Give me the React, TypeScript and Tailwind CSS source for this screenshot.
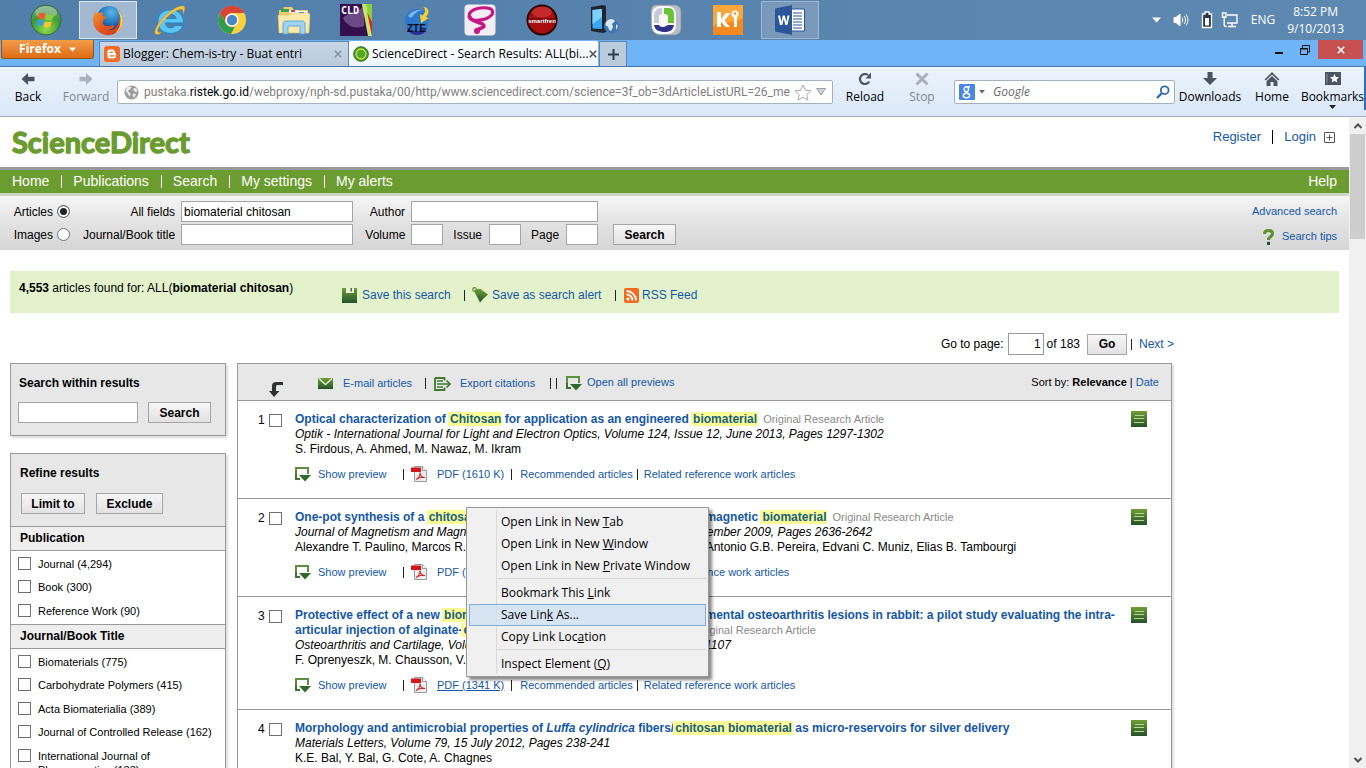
import type { ReactNode } from "react";

const UI = "font-['Open_Sans','Noto_Sans',sans-serif]";
const PAGE = "font-['Liberation_Sans',Arial,sans-serif]";

/* ---------- taskbar icons ---------- */

function StartIcon() {
  return (
    <svg width="32" height="32" viewBox="0 0 32 32" aria-hidden="true">
      <defs>
        <radialGradient id="orb" cx="50%" cy="80%" r="80%">
          <stop offset="0" stopColor="#8fdc4a" />
          <stop offset="0.6" stopColor="#3f9a3a" />
          <stop offset="1" stopColor="#6f9f7a" />
        </radialGradient>
      </defs>
      <circle cx="16" cy="16" r="15" fill="url(#orb)" stroke="#2f6b3c" strokeWidth="1" />
      <ellipse cx="16" cy="8.5" rx="11" ry="6.5" fill="#fff" opacity="0.3" />
      <path d="M9 9.500c2.300-1 4.300-.8 6.500.4l-1.300 5.400c-2-1-4.200-1.200-6.500-.2z" fill="#f0592b" />
      <path d="M16.700 10.400c2.200 1 4.400 1 6.800 0l-1.500 5.500c-2.200 1-4.400.9-6.600-.1z" fill="#8fd03a" />
      <path d="M7.400 16.500c2.300-1 4.300-.8 6.400.3l-1.400 5.300c-2-1.100-4.200-1.300-6.500-.2z" fill="#3d9be0" />
      <path d="M15 17.400c2.200 1 4.400 1 6.700 0l-1.500 5.400c-2.200 1-4.400.9-6.600-.1z" fill="#fdc52f" />
    </svg>
  );
}

function FirefoxIcon() {
  return (
    <svg width="32" height="32" viewBox="0 0 32 32" aria-hidden="true">
      <defs>
        <radialGradient id="ffg" cx="60%" cy="25%" r="75%">
          <stop offset="0" stopColor="#58b7ea" />
          <stop offset="0.6" stopColor="#2272b8" />
          <stop offset="1" stopColor="#173a78" />
        </radialGradient>
        <linearGradient id="fft" x1="0" y1="0" x2="1" y2="1">
          <stop offset="0" stopColor="#f39a2d" />
          <stop offset="0.5" stopColor="#e4581f" />
          <stop offset="1" stopColor="#c93a1a" />
        </linearGradient>
      </defs>
      <circle cx="17" cy="14.500" r="12.500" fill="url(#ffg)" />
      <path d="M25 5.500c5 4 6.600 9.500 5.200 15-1.600 6.500-7.600 10.700-14 10.700C8.500 31.200 1 25 1 16c0-3.600 1.300-7 3-9.200 0 1.400.3 2.300.9 3.100C6.700 8.300 9 8.300 11.500 9c-.8 1-1 2-.7 3.100 1 .5 2.400.5 3.600.8-.2 1.600-2 2.300-3.200 3-.2 1.300.4 2.300-.8 2.600 1.200 3.400 4.800 4.600 7.800 3.400 2.400-1 3.800-.9 4.600.2-1.700 2.500-4.300 4-7.500 3.900 7 1.600 12.600-4.500 11.500-11.500 1 1 1.300 2.100 1.500 3.300.8-4.300-.8-8.800-3.300-12.300z" fill="url(#fft)" />
      <path d="M25 5.500c5 4 6.600 9.500 5.200 15-1 4-3.600 7-7 8.900 4-4 5.500-8.400 5.100-11.600.8-4.300-.8-8.800-3.300-12.300z" fill="#fbd24a" />
    </svg>
  );
}

function IeIcon() {
  return (
    <svg width="32" height="32" viewBox="0 0 32 32" aria-hidden="true">
      <path d="M29.500 19H11.400c.3 3 2.300 4.800 5.200 4.800 2.200 0 3.700-.8 4.500-2.400h7.700C27.400 26.200 23 29.400 16.600 29.400 9 29.400 3.800 24.600 3.800 17.600S9 5.800 16.500 5.800 29.700 10.700 29.500 19zm-7.400-4.600c-.3-2.400-2.300-4-5.200-4s-5 1.600-5.500 4z" fill="#5cc5f2" stroke="#1f86c8" strokeWidth="1" />
      <path d="M8 27.500c-3.200 3.500-6.600 3.700-7 1.200C.2 24.500 7 15 14.500 9 22 3 28.600.4 30.300 2.800c1 1.500.3 4.400-1.300 7.200.4-2.200.3-3.900-.8-4.500C25.700 4.200 19 7.600 12.800 13.400 6 19.700 2.600 26 4 27.800c.7.900 2.200.7 4-.3z" fill="#f6c63c" stroke="#d99a1d" strokeWidth="0.500" />
    </svg>
  );
}

function ChromeIcon() {
  return (
    <svg width="30" height="30" viewBox="0 0 30 30" aria-hidden="true">
      <circle cx="15" cy="15" r="14" fill="#fcd040" />
      <path d="M2.900 8A14 14 0 0 1 27.300 8H15a7 7 0 0 0-6.300 10z" fill="#db4437" />
      <path d="M2.900 8 9 18.500A7 7 0 0 0 18 21.500L14 29A14 14 0 0 1 2.900 8z" fill="#2e9e4f" />
      <circle cx="15" cy="15" r="6.600" fill="#fff" />
      <circle cx="15" cy="15" r="5.200" fill="#4a86c8" />
    </svg>
  );
}

function FolderIcon() {
  return (
    <svg width="34" height="30" viewBox="0 0 34 30" aria-hidden="true">
      <path d="M2 5h4l1-3h8l2 3h14v22H2z" fill="#eccf72" />
      <path d="M4 4h8v3H4z" fill="#3da14c" />
      <path d="M12 5h9v3h-9z" fill="#fff" />
      <path d="M14 5h4v2h-4z" fill="#d5412e" />
      <path d="M21 6h9v4h-9z" fill="#fff" />
      <path d="M22 7h5v2h-5z" fill="#3a87d0" />
      <path d="M1 10h11l3-2h17l1 2-1 18H2z" fill="#fae9a8" stroke="#d9b95c" strokeWidth="0.600" />
      <path d="M6 29V19c0-2 1-3 3-3h16c2 0 3 1 3 3v10h-5v-8H11v8z" fill="#9fd4f2" stroke="#4f9fd0" strokeWidth="0.800" />
    </svg>
  );
}

function CldIcon() {
  return (
    <svg width="32" height="32" viewBox="0 0 32 32" aria-hidden="true">
      <path d="M0 0h32v32H0z" fill="#35104f" />
      <path d="M3 14C8 8 16 10 24 2v20C17 25 8 24 3 14z" fill="#6b4a85" />
      <path d="M22 0h10v32h-3z" fill="#8ccf3f" />
      <path d="M22 0h4l6 32h-4z" fill="#c4e96a" />
      <path d="M27 8l5 10v14z" fill="#e0271f" />
      <text x="1" y="10" fontFamily="DejaVu Sans Mono, monospace" fontSize="10" fontWeight="700" fill="#fff">CLD</text>
    </svg>
  );
}

function ZteIcon() {
  return (
    <svg width="30" height="32" viewBox="0 0 30 32" aria-hidden="true">
      <circle cx="14" cy="17" r="12" fill="#2f77c9" />
      <path d="M4 24c6 4 14 4 20 0-2 6-6 7-10 7S6 29 4 24z" fill="#2a2f96" />
      <path d="M5 12c4-5 10-7 14-6-5 1-8 4-11 8z" fill="#7fb8ee" />
      <path d="M20 3c6 0 7 5 3 10l3 1-8 5-1-9 2.500 1.500C23 8 23 5 20 3z" fill="#f4d030" />
      <text x="4" y="28" fontFamily="Liberation Sans, sans-serif" fontSize="10" fontWeight="700" fill="#0a0a14">ZTE</text>
    </svg>
  );
}

function SwirlIcon() {
  return (
    <svg width="32" height="32" viewBox="0 0 32 32" aria-hidden="true">
      <rect x="0.500" y="0.500" width="31" height="31" rx="4" fill="#f3eef3" />
      <path d="M27 5C18 2 5 5 5 12c0 7 16 4 20 1 4-2 4-5 3-7" fill="none" stroke="#c71585" strokeWidth="3" strokeLinecap="round" />
      <path d="M6 13c2 6 14 5 14 9 0 2-4 2-7 4" fill="none" stroke="#c71585" strokeWidth="3.500" strokeLinecap="round" />
      <circle cx="13" cy="27" r="3" fill="#c71585" />
    </svg>
  );
}

function SmartfrenIcon() {
  return (
    <svg width="32" height="32" viewBox="0 0 32 32" aria-hidden="true">
      <circle cx="16" cy="16" r="14.500" fill="#a90d10" stroke="#2a0405" strokeWidth="2" />
      <ellipse cx="16" cy="8" rx="10" ry="5.500" fill="#e0484a" opacity="0.500" />
      <path d="M2 14h28v5H2z" fill="#7c0a0c" />
      <text x="16" y="18.500" textAnchor="middle" fontFamily="Liberation Sans, sans-serif" fontSize="6" fontWeight="700" fill="#fff">smartfren</text>
    </svg>
  );
}

function PhoneIcon() {
  return (
    <svg width="32" height="32" viewBox="0 0 32 32" aria-hidden="true">
      <path d="M3 3 15 1l3 1v26l-3 1-12-2z" fill="#20242c" />
      <path d="M4.500 6 14 5v20l-9.500-.5z" fill="#38a8f5" />
      <path d="M4.500 6 14 5v8L4.500 20z" fill="#7fd0ff" />
      <circle cx="23.500" cy="22" r="7.500" fill="#3f77b4" />
      <path d="M19 17c3-3 7-2 8 0l-3 3 1 3-2 4c-3-1-2-4-4-5-2 0-2-3 0-5zM28 20l2 2-2 4z" fill="#dfe8ee" />
    </svg>
  );
}

function NokiaIcon() {
  return (
    <svg width="32" height="32" viewBox="0 0 32 32" aria-hidden="true">
      <path d="M6 1h18c5 0 7 3 7 7v16c0 5-3 7-7 7H10c-6 0-9-5-9-12V8c0-5 2-7 5-7z" fill="#b9bec6" stroke="#868c98" strokeWidth="0.800" />
      <rect x="2" y="2" width="24" height="28" rx="8" fill="#f7f8fa" />
      <path d="M14 4h4c4 0 6 2 6 6v9h-6v-6c0-2-1-3-4-3z" fill="#6cc235" />
      <path d="M12 4v6c-2 0-3 1-3 3v6H4v-7c0-5 3-8 8-8z" fill="#c6c9d8" />
      <path d="M4 21h5c1 2 3 2 5 2l4-2h6c-1 5-4 7-9 7-6 0-10-2-11-7z" fill="#34318c" />
    </svg>
  );
}

function KiIcon() {
  return (
    <svg width="30" height="30" viewBox="0 0 30 30" aria-hidden="true">
      <path d="M0 0h30v30H0z" fill="#f48a1f" />
      <path d="M0 0h30v13C18 20 8 14 0 22z" fill="#f9a63a" />
      <path d="M4 7h4v7l5-6h4.500l-6 7.500L17 22h-4.500L8 16.800V22H4z" fill="#fff" />
      <circle cx="22" cy="9" r="3.500" fill="#fff" />
      <path d="M21 11h3v11h-3z" fill="#fff" />
      <circle cx="22" cy="8.500" r="1.200" fill="#f48a1f" />
    </svg>
  );
}

function WordIcon() {
  return (
    <svg width="32" height="30" viewBox="0 0 32 30" aria-hidden="true">
      <path d="M16 4h14.500v22H16z" fill="#fff" stroke="#2b579a" strokeWidth="1" />
      <path d="M19 8h9M19 11h9M19 14h9M19 17h9M19 20h9M19 23h9" stroke="#2b579a" strokeWidth="1.200" />
      <path d="M1 3.500 18 0v30L1 26.500z" fill="#2b579a" />
      <path d="M4 10.500h2l1.300 6.500 1.500-6.500h2l1.500 6.500 1.200-6.500h2L13.400 20h-2.100L9.800 13.700 8.300 20H6z" fill="#fff" />
    </svg>
  );
}

const taskItems: { name: string; icon: ReactNode; box: string }[] = [
  { name: "Start", icon: <StartIcon />, box: "border-transparent" },
  { name: "Firefox", icon: <FirefoxIcon />, box: "border-[#dbe6f0] bg-[#a3b9d1]" },
  { name: "Internet Explorer", icon: <IeIcon />, box: "border-transparent" },
  { name: "Chrome", icon: <ChromeIcon />, box: "border-transparent" },
  { name: "File Explorer", icon: <FolderIcon />, box: "border-transparent" },
  { name: "CLD", icon: <CldIcon />, box: "border-transparent" },
  { name: "ZTE", icon: <ZteIcon />, box: "border-transparent" },
  { name: "Media", icon: <SwirlIcon />, box: "border-transparent" },
  { name: "Smartfren", icon: <SmartfrenIcon />, box: "border-transparent" },
  { name: "Phone", icon: <PhoneIcon />, box: "border-transparent" },
  { name: "Nokia", icon: <NokiaIcon />, box: "border-transparent" },
  { name: "KI", icon: <KiIcon />, box: "border-transparent" },
  { name: "Word", icon: <WordIcon />, box: "border-[#9db8d2] bg-[#7998ba]" },
];

function Taskbar() {
  return (
    <div className={`flex h-10 shrink-0 items-center justify-between bg-linear-to-r from-[#517eaa] to-[#5d89b1] pr-[22px] pl-[17px] text-white ${UI}`}>
      <div className="flex gap-1">
        {taskItems.map((t) => (
          <button key={t.name} aria-label={t.name} className={`flex h-[38px] w-[58px] items-center justify-center border ${t.box}`}>
            {t.icon}
          </button>
        ))}
      </div>
      <div className="flex items-center pb-px text-[12px] leading-[17px]">
        <svg className="mr-3" width="9" height="6" viewBox="0 0 9 6" aria-hidden="true"><path d="M0 .5h9L4.500 5.500z" fill="#fff" /></svg>
        <svg className="mr-3" width="16" height="16" viewBox="0 0 16 16" fill="none" stroke="#fff" aria-hidden="true">
          <path d="M1 5.500h2L7 2v12l-4-3.500H1z" fill="#fff" />
          <path d="M9 5.500c1 1.500 1 3.500 0 5M11 4c2 2.500 2 5.500 0 8M13 2.500c2.500 3.500 2.500 7.500 0 11" />
        </svg>
        <svg className="mr-2" width="12" height="18" viewBox="0 0 12 18" aria-hidden="true">
          <path d="M4 1h4v2h2.500v13.500h-9V3H4z" fill="#26394d" stroke="#fff" strokeWidth="1.300" />
          <path d="M4 7h4v7.500H4z" fill="#fff" />
        </svg>
        <svg className="mr-3" width="18" height="16" viewBox="0 0 18 16" fill="none" stroke="#fff" strokeWidth="1.400" aria-hidden="true">
          <path d="M6 3h10v8H6M11 11v3M7 14.500h8M1.500 1h3.500v4H1.500zM3.200 5v8c0 1 1 1.500 2.500 1.500" />
        </svg>
        <span className="mr-3">ENG</span>
        <div className="text-center"><div>8:52 PM</div><div>9/10/2013</div></div>
      </div>
    </div>
  );
}

/* ---------- browser chrome ---------- */

function TitleBar() {
  return (
    <div className={`flex h-[27px] shrink-0 items-end justify-between border-b border-[#4878a6] bg-[#6eb4f7] text-[12px] ${UI}`}>
      <div className="flex h-full items-end">
        <button className="mr-[5px] ml-px flex h-[19px] w-[93px] items-center justify-center gap-2 self-start rounded-b-[3px] border border-t-0 border-[#9c5312] bg-linear-to-b from-[#f39c46] to-[#dd6c10] text-[12px] font-bold text-white">
          Firefox
          <svg width="7" height="5" viewBox="0 0 7 5" aria-hidden="true"><path d="M0 .5h7L3.500 4.500z" fill="#fff" /></svg>
        </button>
        <div className="flex h-[25px] w-[250px] items-center border border-b-0 border-[#5e86ae] bg-linear-to-b from-[#c9d8e8] to-[#b9c9da] px-1">
          <svg width="16" height="16" viewBox="0 0 16 16" className="mr-[3px]" aria-hidden="true">
            <rect width="16" height="16" rx="3" fill="#f36c21" />
            <path d="M5.500 3.500h3a2.300 2.300 0 0 1 2.300 2.300c0 .8.300 1.200 1.200 1.200v3.200a2.500 2.500 0 0 1-2.500 2.400H5.700a2.300 2.300 0 0 1-2.300-2.400V5.800a2.200 2.200 0 0 1 2.100-2.300z" fill="#fff" />
            <path d="M6 6.300h2.500M6 9.800h4" stroke="#f36c21" strokeWidth="1.300" strokeLinecap="round" />
          </svg>
          <span className="flex-1 whitespace-nowrap text-black">Blogger: Chem-is-try - Buat entri</span>
          <button aria-label="Close tab" className="px-[2px] text-[#8593a3]"><CloseGlyph /></button>
        </div>
        <div className="flex h-[25px] w-[249px] items-center rounded-t-[2px] bg-linear-to-b from-white to-[#eef5fd] px-1">
          <svg width="16" height="16" viewBox="0 0 16 16" className="mr-[3px] shrink-0" aria-hidden="true">
            <circle cx="8" cy="8" r="7.300" fill="#3f9b2e" stroke="#2d6f22" />
            <circle cx="8" cy="8" r="5" fill="#54a82f" stroke="#d5dc3a" strokeWidth="1.300" />
          </svg>
          <span className="flex-1 whitespace-nowrap text-black">ScienceDirect - Search Results: ALL(bi...</span>
          <button aria-label="Close tab" className="text-[#4a525c]"><CloseGlyph /></button>
        </div>
        <button aria-label="New tab" className="ml-px flex h-[25px] w-7 items-center justify-center border border-b-0 border-[#5e86ae] bg-[#b9cbdd]">
          <svg width="11" height="11" viewBox="0 0 11 11" aria-hidden="true"><path d="M5.500 0v11M0 5.500h11" stroke="#333f4d" strokeWidth="2" /></svg>
        </button>
      </div>
      <div className="mr-[3px] flex h-[19px] items-center self-start">
        <button aria-label="Minimize" className="flex h-full w-[27px] items-end justify-center pb-[5px]"><span className="h-[2px] w-2 bg-[#111]" /></button>
        <button aria-label="Restore" className="flex h-full w-[26px] items-center justify-center">
          <svg width="10" height="10" viewBox="0 0 10 10" fill="none" stroke="#111" aria-hidden="true"><path d="M.5 3.500h7v6h-7zM.5 4h7M2.500 3V.5h7V7H8" /></svg>
        </button>
        <button aria-label="Close" className="flex h-full w-[45px] items-center justify-center bg-[#c75050] text-white"><CloseGlyph /></button>
      </div>
    </div>
  );
}

function CloseGlyph() {
  return <svg width="8" height="8" viewBox="0 0 8 8" aria-hidden="true"><path d="m.8.8 6.400 6.400M7.200.8.800 7.200" stroke="currentColor" strokeWidth="1.600" /></svg>;
}

function ToolButton({ label, width, muted, children, more }: { label: string; width: string; muted?: boolean; children: ReactNode; more?: boolean }) {
  return (
    <button className={`flex shrink-0 flex-col items-center pt-1 text-[12px] leading-4 ${width} ${muted ? "text-[#7d8794]" : "text-black"}`}>
      <svg width="16" height="16" viewBox="0 0 16 16" className="mb-[2px]" aria-hidden="true">{children}</svg>
      <span>{label}</span>
      {more && <svg width="7" height="4" viewBox="0 0 7 4" aria-hidden="true"><path d="M0 0h7L3.500 4z" fill="#222" /></svg>}
    </button>
  );
}

function Toolbar() {
  return (
    <div className={`relative flex h-[50px] shrink-0 items-start border-b border-[#a9b0b8] bg-linear-to-b from-[#ecf4fd] to-[#d9e7f6] ${UI}`}>
      <ToolButton label="Back" width="w-14"><path d="M8 2v3.800h6.500v4.400H8V14L1.500 8z" fill="#4b5461" /></ToolButton>
      <ToolButton label="Forward" width="w-[60px]" muted><path d="M8 2v3.800H1.500v4.400H8V14l6.500-6z" fill="#a9b3bf" /></ToolButton>
      <div className="relative mt-[13px] ml-px flex h-6 min-w-0 flex-1 items-center rounded-[2px] border border-[#a4b1c0] bg-white px-[6px] text-[12px]">
        <svg width="15" height="15" viewBox="0 0 15 15" className="mr-[5px] shrink-0" aria-hidden="true">
          <circle cx="7.500" cy="7.500" r="7" fill="#9b9b9b" />
          <path d="M3 2.500c2-1.500 4-1 4.500 0L6 4.500 4.500 5v2l2 1.500-.5 3L4.500 10 3 7.500 1.500 6zM9.500 3l3 .5 1 3-2 .5-2-1.500zM9 8.500l3 .5-1.500 3.500L8.500 11z" fill="#ececec" />
        </svg>
        <span className="flex-1 overflow-hidden font-['Roboto',sans-serif] whitespace-nowrap text-[#808080]">
          pustaka.<span className="text-black">ristek.go.id</span>/webproxy/nph-sd.pustaka/00/http/www.sciencedirect.com/science=3f_ob=3dArticleListURL=26_meth
        </span>
        <svg width="18" height="17" viewBox="0 0 18 17" className="mx-1 shrink-0" aria-hidden="true"><path d="m9 1 2.300 5.200 5.700.6-4.200 3.800 1.200 5.500L9 13.300 4 16.100l1.200-5.500L1 6.800l5.700-.6z" fill="#fff" stroke="#aaa" /></svg>
        <svg width="10" height="8" viewBox="0 0 10 8" className="shrink-0" aria-hidden="true"><path d="M.5.500h9L5 7z" fill="#c9d1d9" stroke="#98a3af" /></svg>
        <input aria-label="Address" className="absolute inset-0 w-full bg-transparent opacity-0" />
      </div>
      <ToolButton label="Reload" width="w-16"><path d="M12.300 10.500A5 5 0 1 1 11 4" fill="none" stroke="#4b5461" strokeWidth="2.200" /><path d="M8.500 7.500H14V1.500z" fill="#4b5461" /></ToolButton>
      <ToolButton label="Stop" width="w-[50px]" muted><path d="m2.500 2.500 11 11M13.500 2.500l-11 11" stroke="#a9b0b9" strokeWidth="3" /></ToolButton>
      <div className="mt-[13px] ml-[7px] flex h-6 w-[221px] shrink-0 items-center rounded-[2px] border border-[#a4b1c0] bg-white px-1 text-[12px]">
        <svg width="16" height="16" viewBox="0 0 16 16" className="shrink-0" aria-hidden="true">
          <rect width="16" height="16" rx="1" fill="#4a86e8" />
          <g fill="none" stroke="#fff" strokeWidth="1.400"><ellipse cx="7.300" cy="5.200" rx="2.200" ry="2.400" /><ellipse cx="7.500" cy="11.500" rx="3.200" ry="2.200" /><path d="M8.500 2.800H11M7 7.600c-1 1 1.500 1.200 2.500 2.200" /></g>
        </svg>
        <svg width="6" height="4" viewBox="0 0 6 4" className="mx-1 shrink-0" aria-hidden="true"><path d="M0 0h6L3 3.500z" fill="#666" /></svg>
        <input aria-label="Search with Google" placeholder="Google" className="min-w-0 flex-1 bg-transparent px-1 italic outline-none placeholder:text-[#6b6b6b]" />
        <svg width="14" height="14" viewBox="0 0 14 14" className="shrink-0" fill="none" aria-hidden="true"><circle cx="8.700" cy="5.200" r="3.900" stroke="#2f6dad" strokeWidth="1.800" /><path d="m6 8-5 5" stroke="#2f6dad" strokeWidth="2.400" /></svg>
      </div>
      <ToolButton label="Downloads" width="w-[70px]"><path d="M5.500 1h5v6H15l-7 7-7-7h4.500z" fill="#4b5461" /></ToolButton>
      <ToolButton label="Home" width="w-[54px]"><path d="M8 1 .5 8.500l1.300 1L8 3.500l6.200 6 1.300-1zM8 5l-5.500 5.200V15h4v-4h3v4h4v-4.800z" fill="#4b5461" /></ToolButton>
      <ToolButton label="Bookmarks" width="w-[67px]" more><path d="M0 1h16v13H0z" fill="#4b5461" /><path d="M2 3v9" stroke="#8a929c" strokeWidth="1" /><path d="m9.500 3 1.300 2.900 3.200.3-2.400 2.200.7 3.100-2.800-1.600-2.800 1.600.7-3.100L5 6.200l3.200-.3z" fill="#fff" /></ToolButton>
      <span aria-hidden="true" className="absolute top-0 right-0 h-[43px] w-[2px] bg-[#2d6fc0]" />
    </div>
  );
}

/* ---------- page pieces ---------- */

const link = "text-[#1457a8]";
const field = "h-[21px] border border-[#a5a5a5] bg-white px-[2px] text-[12px] outline-none";
const greyButton = "h-[21px] border border-[#a5a5a5] bg-linear-to-b from-[#f6f6f6] to-[#e2e2e2] text-[12px] font-bold text-black";
const tick = "size-[13px] shrink-0 appearance-none border border-[#707070] bg-white checked:bg-[#444]";
const radio = "size-[13px] appearance-none rounded-full border border-[#707070] bg-white checked:bg-[#222] checked:shadow-[inset_0_0_0_2px_#fff]";

function Gradients() {
  return (
    <svg width="0" height="0" className="absolute" aria-hidden="true">
      <defs>
        <linearGradient id="leaf" x1="0" y1="0" x2="0" y2="1"><stop offset="0" stopColor="#6f9f35" /><stop offset="1" stopColor="#235229" /></linearGradient>
      </defs>
    </svg>
  );
}

function PreviewIcon() {
  return (
    <svg width="16" height="15" viewBox="0 0 16 15" className="shrink-0" aria-hidden="true">
      <path d="M4 12H1V1h12v6" fill="none" stroke="#5f8f3c" strokeWidth="2" />
      <path d="M1 7v5h4" fill="none" stroke="#3f7034" strokeWidth="2" />
      <path d="M4 8h12l-6 6.500z" fill="#2f6a2c" />
    </svg>
  );
}

function PdfIcon() {
  return (
    <svg width="16" height="16" viewBox="0 0 16 16" className="shrink-0" aria-hidden="true">
      <path d="M3.500.5h8l4 4v11h-12z" fill="#ededed" stroke="#9a9a9a" />
      <path d="M11.500.5v4h4" fill="#fff" stroke="#9a9a9a" />
      <path d="M0 1.500h10V6H0z" fill="#d3161b" />
      <path d="M5 13.500c3-1.500 4-5 4-7 0 3 2 5 5 5-3-.5-6 0-9 2z" fill="none" stroke="#d3262a" strokeWidth="1.100" />
    </svg>
  );
}

function NavBar() {
  return (
    <nav className="flex h-[29px] items-center justify-between border-t-[3px] border-b-[3px] border-t-[#999] border-b-[#cdd6c6] bg-[#6b9c2f] pr-3 text-[14px] text-white">
      <div className="flex items-center">
        {["Home", "Publications", "Search", "My settings", "My alerts"].map((n) => (
          <a key={n} href="#" className="border-l border-white pr-3 pl-[11px] leading-[13px] first:border-transparent">{n}</a>
        ))}
      </div>
      <a href="#">Help</a>
    </nav>
  );
}

function SearchForm() {
  return (
    <form className="flex h-[54px] items-start justify-between bg-linear-to-b from-[#f6f6f6] via-[#e2e2e2] to-[#d6d6d6] pt-[5px] pr-3 text-[12px]">
      <div className="flex">
        <div className="flex w-[70px] flex-col items-end gap-[2px]">
          <label className="flex h-[21px] items-center gap-1">Articles <input type="radio" name="kind" defaultChecked className={radio} /></label>
          <label className="flex h-[21px] items-center gap-1">Images <input type="radio" name="kind" className={radio} /></label>
        </div>
        <div className="ml-[13px] flex flex-col items-end gap-[2px]">
          <label className="flex items-center gap-[6px]">All fields <input defaultValue="biomaterial chitosan" className={`${field} w-[172px]`} /></label>
          <label className="flex items-center gap-[6px]">Journal/Book title <input className={`${field} w-[172px]`} /></label>
        </div>
        <div className="ml-[10px] flex w-[235px] flex-col items-end gap-[2px]">
          <label className="flex items-center gap-[6px]">Author <input className={`${field} w-[187px]`} /></label>
          <div className="flex gap-[10px]">
            <label className="flex items-center gap-[6px]">Volume <input className={`${field} w-8`} /></label>
            <label className="flex items-center gap-[7px]">Issue <input className={`${field} w-8`} /></label>
            <label className="flex items-center gap-[7px]">Page <input className={`${field} w-8`} /></label>
          </div>
        </div>
        <button type="button" className={`${greyButton} mt-[23px] ml-[15px] w-[63px]`}>Search</button>
      </div>
      <div className="flex flex-col items-end gap-1 text-[11px]">
        <a href="#" className={`${link} leading-[21px]`}>Advanced search</a>
        <a href="#" className={`${link} flex items-center gap-2 leading-[21px]`}>
          <svg width="11" height="16" viewBox="0 0 11 16" aria-hidden="true"><path d="M1.500 5C1.500 2.800 3.200 1.500 5.500 1.500s4 1.200 4 3.300C9.500 7.500 5.500 7.500 5.500 11" fill="none" stroke="#5e9132" strokeWidth="3" /><path d="M4 12.800h3V16H4z" fill="#235229" /></svg>
          Search tips
        </a>
      </div>
    </form>
  );
}

function FoundBar() {
  return (
    <div className="mx-[10px] mt-[21px] flex h-[42px] items-start bg-[#e4f2cc] px-[9px] pt-[9px] text-[12px] leading-4">
      <p className="w-[323px]"><b>4,553</b> articles found for: ALL(<b>biomaterial chitosan</b>)</p>
      <div className="flex items-center gap-[10px] pt-[7px]">
        <a href="#" className={`${link} flex w-[112px] items-center gap-[5px]`}>
          <svg width="15" height="15" viewBox="0 0 15 15" aria-hidden="true"><path d="M0 0h15v15H0z" fill="url(#leaf)" /><path d="M4 0h8v5H4z" fill="#e9f3dc" /><path d="M8.500 0h1.500v3.500H8.500z" fill="#3f7034" /></svg>
          Save this search
        </a>
        <Bar />
        <a href="#" className={`${link} ml-[-3px] flex w-[133px] items-center gap-1`}>
          <svg width="16" height="16" viewBox="0 0 16 16" aria-hidden="true"><circle cx="2.500" cy="2.500" r="1.800" fill="none" stroke="#5e9132" strokeWidth="1.200" /><path d="M2 4c3-3 7-3 9 0l5 3.500-4 3.500-4 4.500-2-4z" fill="url(#leaf)" /></svg>
          Save as search alert
        </a>
        <Bar />
        <a href="#" className={`${link} ml-[-2px] flex items-center gap-[3px]`}>
          <svg width="15" height="15" viewBox="0 0 15 15" aria-hidden="true"><rect width="15" height="15" rx="2" fill="#f26a1b" /><circle cx="4" cy="11" r="1.600" fill="#fff" /><path d="M2.500 6.500a6 6 0 0 1 6 6M2.500 3a9.500 9.500 0 0 1 9.500 9.500" fill="none" stroke="#fff" strokeWidth="1.800" /></svg>
          RSS Feed
        </a>
      </div>
    </div>
  );
}

function Bar() {
  return <span aria-hidden="true" className="h-[11px] w-px shrink-0 bg-[#222]" />;
}

function Facet({ title, items }: { title: string; items: string[] }) {
  return (
    <section>
      <h3 className="border-y border-[#999] bg-[#eee] px-[9px] text-[12px] leading-[23px] font-bold">{title}</h3>
      <ul className="bg-white pt-px pb-[2px] text-[11px] leading-[14px]">
        {items.map((t) => (
          <li key={t} className="pt-[5px] pb-1 pl-[7px] even:pb-[5px]">
            <label className="flex items-start gap-[7px]"><input type="checkbox" className={tick} /><span className="max-w-[175px]">{t}</span></label>
          </li>
        ))}
      </ul>
    </section>
  );
}

function Sidebar() {
  const box = "border border-[#999] bg-[#e7e7e7] shadow-[2px_2px_2px_#ddd]";
  return (
    <aside className="flex w-[216px] shrink-0 flex-col gap-[17px]">
      <div className={`${box} h-[73px] px-[7px] pt-[11px]`}>
        <h2 className="px-px text-[12px] leading-4 font-bold">Search within results</h2>
        <div className="mt-[11px] flex gap-[10px]">
          <input aria-label="Search within results" className={`${field} w-[120px]`} />
          <button className={`${greyButton} w-[63px]`}>Search</button>
        </div>
      </div>
      <div className={box}>
        <div className="h-[72px] px-[9px] pt-[11px]">
          <h2 className="text-[12px] leading-4 font-bold">Refine results</h2>
          <div className="mt-3 flex gap-[11px] pl-px">
            <button className={`${greyButton} w-16`}>Limit to</button>
            <button className={`${greyButton} w-[67px]`}>Exclude</button>
          </div>
        </div>
        <Facet title="Publication" items={["Journal (4,294)", "Book (300)", "Reference Work (90)"]} />
        <Facet title="Journal/Book Title" items={["Biomaterials (775)", "Carbohydrate Polymers (415)", "Acta Biomaterialia (389)", "Journal of Controlled Release (162)", "International Journal of Pharmaceutics (133)"]} />
      </div>
    </aside>
  );
}

function Hit({ children }: { children: ReactNode }) {
  return <mark className="-mx-px bg-[#fbfb96] pr-px pl-[2px] text-[#17607c]">{children}</mark>;
}

function Kind() {
  return <span className="ml-[6px] text-[11px] font-normal text-[#8a8a8a]">Original Research Article</span>;
}

type Article = { title: ReactNode; kind?: boolean; journal: string; authors: string; pdf: string; active?: boolean };

const articles: Article[] = [
  {
    title: <>Optical characterization of <Hit>Chitosan</Hit> for application as an engineered <Hit>biomaterial</Hit></>,
    kind: true,
    journal: "Optik - International Journal for Light and Electron Optics, Volume 124, Issue 12, June 2013, Pages 1297-1302",
    authors: "S. Firdous, A. Ahmed, M. Nawaz, M. Ikram",
    pdf: "PDF (1610 K)",
  },
  {
    title: <>One-pot synthesis of a <Hit>chitosan</Hit>-based hydrogels as a potentially novel magnetic <Hit>biomaterial</Hit></>,
    kind: true,
    journal: "Journal of Magnetism and Magnetic Materials, Volume 321(S), Issue 17, September 2009, Pages 2636-2642",
    authors: "Alexandre T. Paulino, Marcos R. Guilherme, Luiz Henrique Capareli Mattoso, Antonio G.B. Pereira, Edvani C. Muniz, Elias B. Tambourgi",
    pdf: "PDF (657 K)",
  },
  {
    title: <>Protective effect of a new <Hit>biomaterial</Hit> against the development of experimental osteoarthritis lesions in rabbit: a pilot study evaluating the intra-articular injection of alginate-<Hit>chitosan</Hit> beads dispersed in a hydrogel</>,
    kind: true,
    journal: "Osteoarthritis and Cartilage, Volume 21, Issue 18, August 2013, Pages 1099-1107",
    authors: "F. Oprenyeszk, M. Chausson, V. Maquet, J.-E. Dubuc, Y. Henrotin",
    pdf: "PDF (1341 K)",
    active: true,
  },
  {
    title: <>Morphology and antimicrobial properties of <i>Luffa cylindrica</i> fibers/<Hit>chitosan biomaterial</Hit> as micro-reservoirs for silver delivery</>,
    journal: "Materials Letters, Volume 79, 15 July 2012, Pages 238-241",
    authors: "K.E. Bal, Y. Bal, G. Cote, A. Chagnes",
    pdf: "PDF (868 K)",
  },
];

function ArticleRow({ article, index }: { article: Article; index: number }) {
  return (
    <li className="flex items-start border-t border-[#999] bg-white pt-[10px] pb-[16px]">
      <label className="mt-[3px] flex w-[57px] shrink-0 items-center justify-start gap-1 pl-5 text-[12px] leading-[13px]">{index}<input type="checkbox" className={tick} /></label>
      <div className="min-w-0 flex-1 pt-px text-[12px] leading-[15px]">
        <h3 className={`${link} font-bold`}><a href="#">{article.title}</a>{article.kind && <Kind />}</h3>
        <p className="italic">{article.journal}</p>
        <p>{article.authors}</p>
        <div className={`${link} mt-[9px] flex h-4 items-center text-[11px]`}>
          <PreviewIcon />
          <a href="#" className="mr-[10px] ml-[7px] min-w-[75px]">Show preview</a>
          <Bar />
          <span className="ml-[7px]"><PdfIcon /></span>
          <a href="#" className={article.active ? "mr-[7px] ml-[10px] underline" : "mr-[7px] ml-[10px]"}>{article.pdf}</a>
          <Bar />
          <a href="#" className="mr-1 ml-2">Recommended articles</a>
          <Bar />
          <a href="#" className="ml-[6px]">Related reference work articles</a>
        </div>
      </div>
      <button aria-label="Article actions" className="mr-6 ml-1 shrink-0">
        <svg width="16" height="16" viewBox="0 0 16 16" aria-hidden="true"><path d="M0 0h16v16H0z" fill="url(#leaf)" /><path d="M4 4.500h9M3 7.500h10M3 11.500h10" stroke="#b9d69a" strokeWidth="1.200" /></svg>
      </button>
    </li>
  );
}

function Results() {
  return (
    <section className="flex-1 border border-[#999] bg-[#e7e7e7] shadow-[2px_2px_2px_#ddd]">
      <div className="flex h-9 items-center pt-[3px] pr-3 text-[11px]">
        <svg width="14" height="16" viewBox="0 0 14 16" className="mt-[10px] ml-[31px]" aria-hidden="true"><path d="M14 1v3H9c-1.500 0-2 .8-2 2v4h3.500L5 16l-5-6h3V5c0-3 1.500-4 4.500-4z" fill="#2d3330" /></svg>
        <svg width="15" height="11" viewBox="0 0 15 11" className="ml-[35px]" aria-hidden="true"><path d="M0 0h15v11H0z" fill="url(#leaf)" /><path d="m1 .5 6.500 6L14 .5" fill="none" stroke="#e7efdc" strokeWidth="1.300" /></svg>
        <a href="#" className={`${link} ml-[10px] w-[82px]`}>E-mail articles</a>
        <Bar />
        <svg width="17" height="14" viewBox="0 0 17 14" className="ml-[8px]" aria-hidden="true"><path d="M1 1h9.500v2.500M10.500 10.500V13H1V1" fill="none" stroke="#3f7a30" strokeWidth="1.800" /><path d="M3 4h6M3 7h8M3 10h6" stroke="#3f7a30" strokeWidth="1.400" /><path d="M10 7h6M12.500 3.500 16 7l-3.500 3.500" fill="none" stroke="#3f7a30" strokeWidth="1.700" /></svg>
        <a href="#" className={`${link} ml-[9px] w-[90px]`}>Export citations</a>
        <Bar />
        <span className="mr-[9px] ml-[5px] flex"><Bar /></span>
        <PreviewIcon />
        <a href="#" className={`${link} ml-[5px] pb-[2px]`}>Open all previews</a>
        <p className="ml-auto pb-[2px]">Sort by: <b>Relevance</b> | <a href="#" className={link}>Date</a></p>
      </div>
      <ul>{articles.map((a, i) => <ArticleRow key={i} article={a} index={i + 1} />)}</ul>
    </section>
  );
}

function MenuItem({ before, hot, after, active }: { before: string; hot: string; after: string; active?: boolean }) {
  return (
    <button role="menuitem" className={`mx-[2px] flex h-[22px] items-center border pl-[31px] text-[12px] whitespace-nowrap ${active ? "border-[#84acdd] bg-[#d1e2f2]/80" : "border-transparent"}`}>
      <span>{before}<u>{hot}</u>{after}</span>
    </button>
  );
}

function ContextMenu() {
  return (
    <div role="menu" className={`absolute top-[390px] left-[466px] flex w-[243px] flex-col border border-[#979797] bg-[#f0f0f0] bg-[linear-gradient(#d9d9d9,#d9d9d9)] bg-[length:1px_calc(100%-4px)] bg-[position:29px_2px] bg-no-repeat pt-[3px] pb-px text-black shadow-[3px_3px_3px_#0007] ${UI}`}>
      <MenuItem before="Open Link in New " hot="T" after="ab" />
      <MenuItem before="Open Link in New " hot="W" after="indow" />
      <MenuItem before="Open Link in New " hot="P" after="rivate Window" />
      <hr className="mt-px mr-[2px] mb-[3px] ml-[30px] border-[#d7d7d7]" />
      <MenuItem before="Bookmark This " hot="L" after="ink" />
      <MenuItem before="Save Lin" hot="k" after=" As..." active />
      <MenuItem before="Copy Link Loc" hot="a" after="tion" />
      <hr className="mt-px mr-[2px] mb-[3px] ml-[30px] border-[#d7d7d7]" />
      <MenuItem before="Inspect Element (" hot="Q" after=")" />
    </div>
  );
}

function Scrollbar() {
  return (
    <div className="flex w-[17px] shrink-0 flex-col items-end bg-[#f0f0f0]">
      <svg width="16" height="17" viewBox="0 0 16 17" fill="none" stroke="#505050" strokeWidth="2" className="shrink-0" aria-hidden="true"><path d="m4.500 11 3.500-3.500L11.500 11" /></svg>
      <div className="mr-px h-[105px] w-[15px] bg-[#cdcdcd]" />
      <svg width="16" height="17" viewBox="0 0 16 17" fill="none" stroke="#505050" strokeWidth="2" className="mt-auto shrink-0" aria-hidden="true"><path d="M4.500 7 8 10.500 11.500 7" /></svg>
    </div>
  );
}

export default function App() {
  return (
    <div className="flex h-screen flex-col overflow-hidden bg-white">
      <Taskbar />
      <TitleBar />
      <Toolbar />
      <div className={`relative flex min-h-0 flex-1 overflow-hidden text-black ${PAGE}`}>
        <Gradients />
        <main className="min-w-0 flex-1">
          <header className="flex h-[50px] items-start justify-between pt-3 pr-[14px] pl-3">
            <svg width="190" height="36" viewBox="0 0 190 36" className="overflow-visible" role="img" aria-label="ScienceDirect">
              <text x="0" y="24" fontFamily="Lato, sans-serif" fontSize="29" fontWeight="700" fill="#6b9c2f" stroke="#6b9c2f" strokeWidth="1.400" strokeLinejoin="round">ScienceDirect</text>
            </svg>
            <div className="flex items-center text-[13px] leading-4">
              <a href="#" className={link}>Register</a>
              <span className="mx-[11px] h-[14px] w-px bg-black" />
              <a href="#" className={link}>Login</a>
              <svg width="11" height="11" viewBox="0 0 11 11" className="ml-2" fill="none" stroke="#555" aria-hidden="true"><path d="M.5.500h10v10H.5zM5.500 2.500v6M2.500 5.500h6" /></svg>
            </div>
          </header>
          <NavBar />
          <SearchForm />
          <FoundBar />
          <div className="mt-5 flex max-w-[1174px] items-center justify-end text-[12px]">
            <label className="flex items-center gap-1">Go to page: <input defaultValue="1" className="h-[22px] w-9 border border-[#999] bg-white px-[2px] text-right text-[12px]" /></label>
            <span className="mr-[7px] ml-[3px]">of 183</span>
            <button className={`${greyButton} mr-1 w-10`}>Go</button>
            <Bar />
            <a href="#" className={`${link} ml-[7px]`}>Next &gt;</a>
          </div>
          <div className="mt-2 flex max-w-[1172px] items-start gap-[11px] pl-[10px]">
            <Sidebar />
            <Results />
          </div>
        </main>
        <Scrollbar />
        <ContextMenu />
      </div>
    </div>
  );
}
